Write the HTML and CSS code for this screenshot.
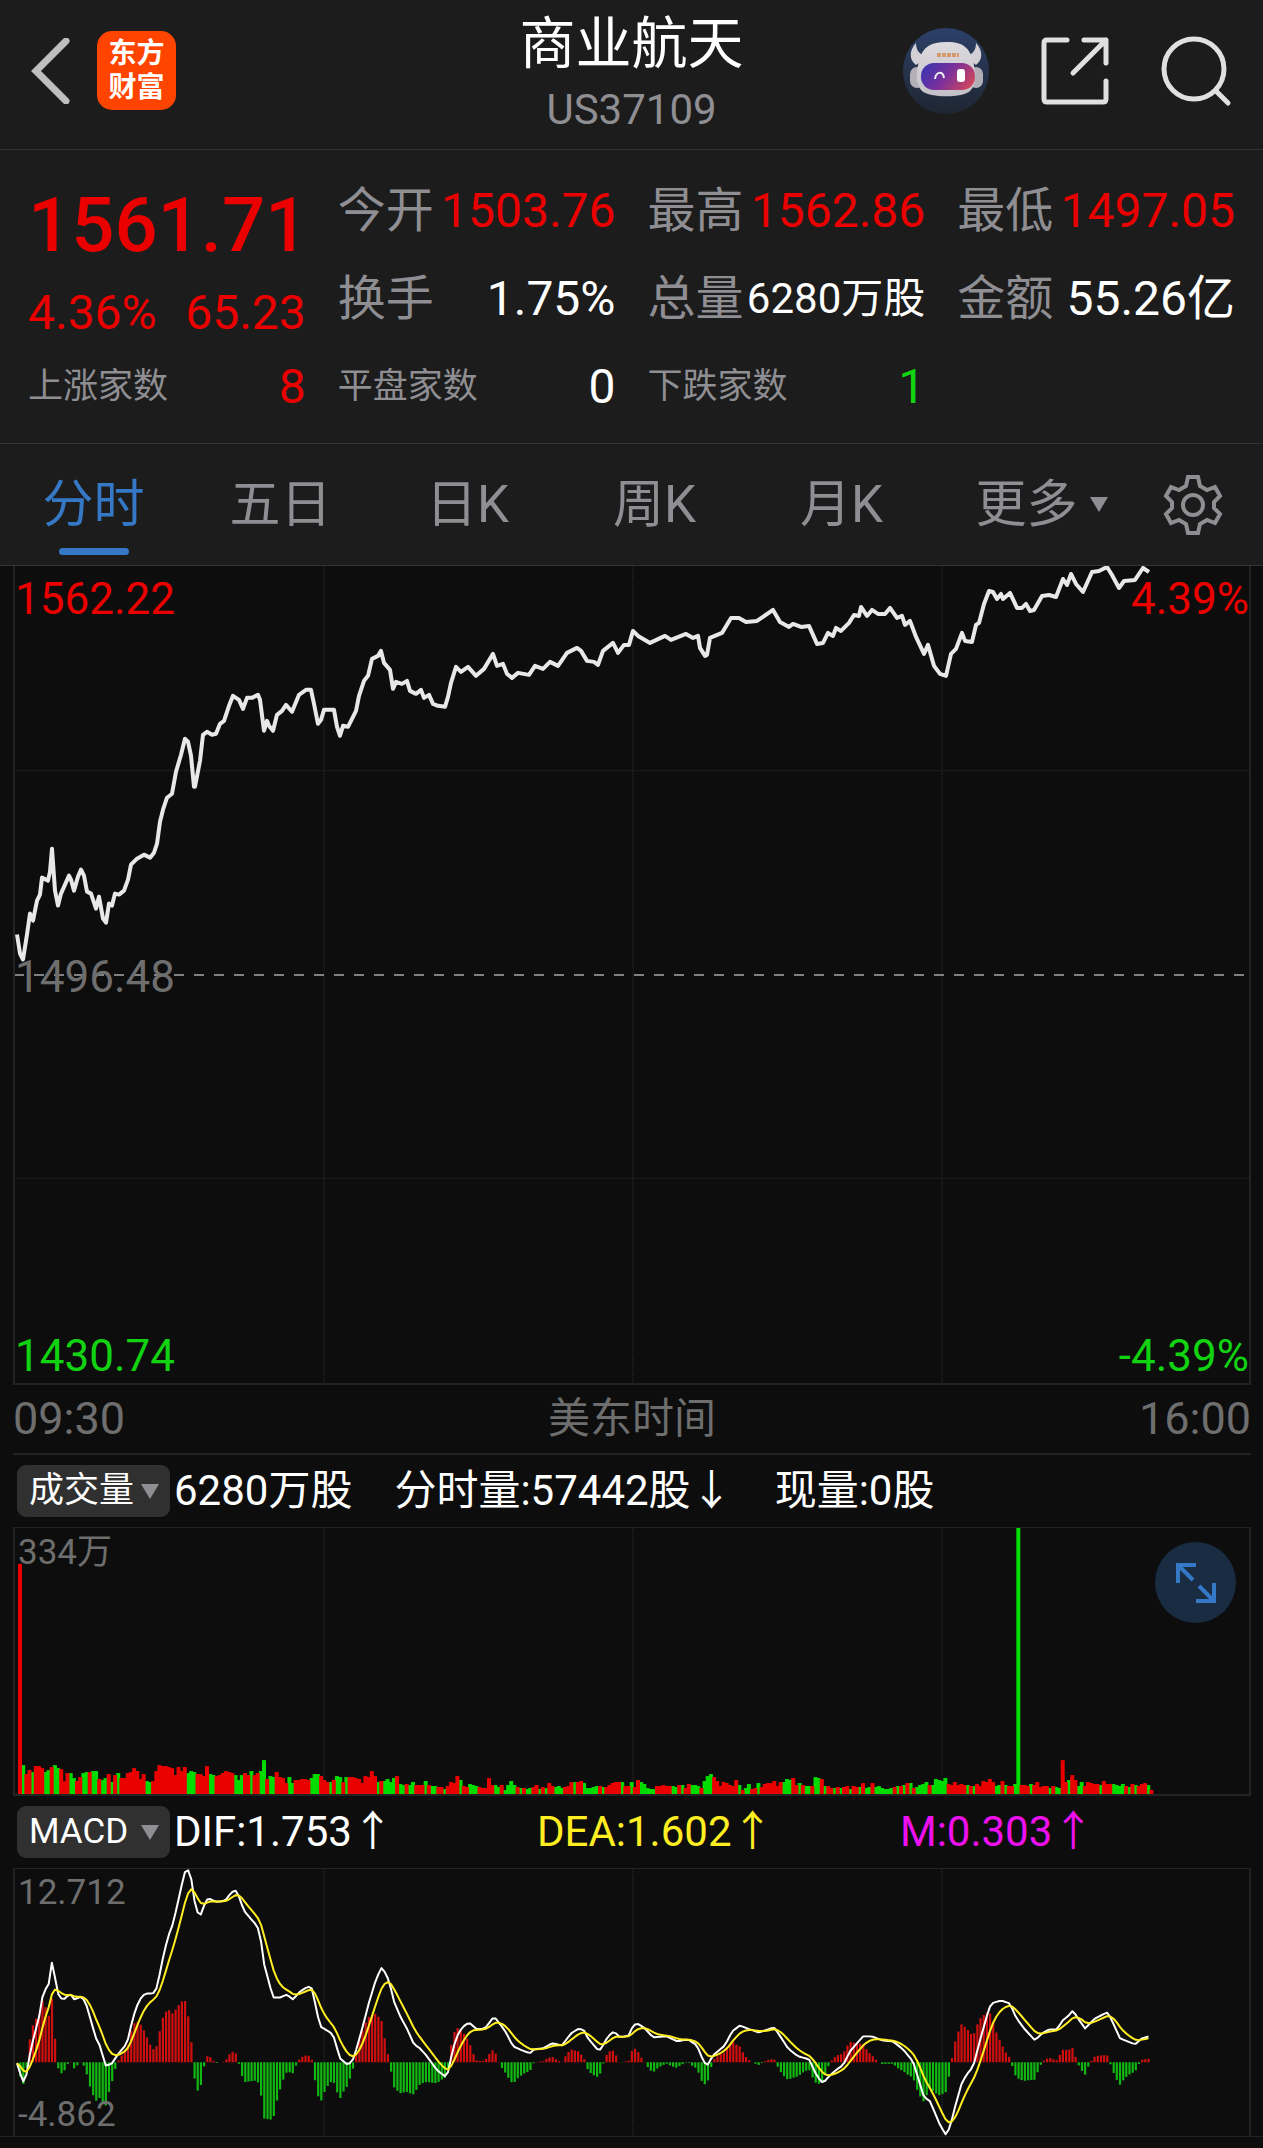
FILE: index.html
```html
<!DOCTYPE html>
<html lang="zh-CN">
<head>
  <meta charset="UTF-8">
  <meta name="viewport" content="width=device-width, initial-scale=1.0">
  <title>商业航天 US37109</title>
  <link rel="stylesheet" href="styles.css">
</head>
<body>
  <header class="topbar">
    <div class="topbar-left">
      <button class="icon-btn" aria-label="返回">
        <svg width="40" height="66" viewBox="0 0 40 66"><path d="M35 3 L5 33 L35 63" fill="none" stroke="#bfbfbf" stroke-width="7" stroke-linecap="round" stroke-linejoin="miter"/></svg>
      </button>
      <a class="logo" href="#"><span>东方</span><span>财富</span></a>
    </div>
    <div class="title">
      <h1>商业航天</h1>
      <p>US37109</p>
    </div>
    <div class="topbar-right">
      <button class="icon-btn" aria-label="智能助手">
        <svg width="88" height="88" viewBox="0 0 88 88">
          <defs>
            <linearGradient id="sky" x1="0" y1="0" x2="0" y2="1"><stop offset="0" stop-color="#2c4068"/><stop offset="1" stop-color="#1f2632"/></linearGradient>
            <linearGradient id="shell" x1="0" y1="0" x2="0" y2="1"><stop offset="0" stop-color="#dcdade"/><stop offset="1" stop-color="#c4c1c8"/></linearGradient>
            <linearGradient id="visor" x1="0" y1="0.2" x2="1" y2="0.6"><stop offset="0" stop-color="#3a35b0"/><stop offset="0.5" stop-color="#7a2f9c"/><stop offset="1" stop-color="#cc4660"/></linearGradient>
          </defs>
          <circle cx="44" cy="44" r="43" fill="url(#sky)"/>
          <path d="M14 16 C8 22 6 32 14 38 L26 30 C18 28 14 24 14 16 Z M74 16 C80 22 82 32 74 38 L62 30 C70 28 74 24 74 16 Z" fill="#d2d0d5"/>
          <rect x="8" y="40" width="14" height="21" rx="7" fill="#b2afb6"/>
          <rect x="67" y="40" width="14" height="21" rx="7" fill="#b2afb6"/>
          <path d="M44 15 C59 14 68 20 71 34 C74 46 75 57 68 64 C61 71 28 71 20 64 C13 57 14 46 17 34 C20 20 29 15 44 15 Z" fill="url(#shell)"/>
          <rect x="19" y="36" width="54" height="27" rx="13" fill="url(#visor)"/>
          <path d="M35 28 L57 28" stroke="#d29a6c" stroke-width="4" stroke-dasharray="4 1"/>
          <path d="M33 52 C34 44 41 44 42 51" fill="none" stroke="#eee" stroke-width="2"/>
          <rect x="55" y="42" width="8" height="13" rx="3" fill="#fff"/>
        </svg>
      </button>
      <button class="icon-btn" aria-label="分享">
        <svg width="70" height="70" viewBox="0 0 70 70" fill="none" stroke="#e0e0e0" stroke-width="5" stroke-linecap="round" stroke-linejoin="round"><path d="M27 4 H7 Q4 4 4 7 V63 Q4 66 7 66 H63 Q66 66 66 63 V45"/><path d="M44 4 H66 V27 M66 4 L33 37"/></svg>
      </button>
      <button class="icon-btn" aria-label="搜索">
        <svg width="72" height="72" viewBox="0 0 72 72" fill="none" stroke="#e0e0e0" stroke-width="5" stroke-linecap="round"><circle cx="34" cy="34" r="30"/><path d="M56 56 L68 68"/></svg>
      </button>
    </div>
  </header>

  <section class="quote">
    <div class="lead up">
      <strong>1561.71</strong>
      <p><span>4.36%</span><span>65.23</span></p>
    </div>
    <div class="item"><span>今开</span><b class="up">1503.76</b></div>
    <div class="item"><span>最高</span><b class="up">1562.86</b></div>
    <div class="item"><span>最低</span><b class="up">1497.05</b></div>
    <div class="item"><span>换手</span><b>1.75%</b></div>
    <div class="item"><span>总量</span><b class="compact">6280万股</b></div>
    <div class="item"><span>金额</span><b>55.26亿</b></div>
    <div class="item small"><span>上涨家数</span><b class="up">8</b></div>
    <div class="item small"><span>平盘家数</span><b>0</b></div>
    <div class="item small"><span>下跌家数</span><b class="down">1</b></div>
  </section>

  <nav class="tabs">
    <button class="active">分时</button>
    <button>五日</button>
    <button>日K</button>
    <button>周K</button>
    <button>月K</button>
    <button class="more">更多<i class="caret"></i></button>
    <button aria-label="设置">
      <svg width="62" height="62" viewBox="0 0 62 62" fill="none" stroke="#8e8e93" stroke-width="4"><path d="M26 3 H36 L38 12 L45 16 L53 13 L58 22 L52 28 V34 L58 40 L53 49 L45 46 L38 50 L36 59 H26 L24 50 L17 46 L9 49 L4 40 L10 34 V28 L4 22 L9 13 L17 16 L24 12 Z"/><circle cx="31" cy="31" r="10"/></svg>
    </button>
  </nav>

  <main class="charts">
    <div class="plot plot-price">
      <svg id="price" viewBox="1 0 1234 818" preserveAspectRatio="none"></svg>
      <span class="tag top left up">1562.22</span>
      <span class="tag top right up">4.39%</span>
      <span class="tag middle left">1496.48</span>
      <span class="tag bottom left down">1430.74</span>
      <span class="tag bottom right down">-4.39%</span>
    </div>
    <div class="axis"><span>09:30</span><span>美东时间</span><span>16:00</span></div>

    <div class="legend">
      <label class="pick"><select aria-label="副图指标一"><option>成交量</option></select><i class="caret"></i></label>
      <span>6280万股</span><span>分时量:57442股↓</span><span>现量:0股</span>
    </div>
    <div class="plot plot-sub">
      <svg id="volume" viewBox="1 0 1234 267" preserveAspectRatio="none"></svg>
      <span class="tag note top left">334万</span>
      <button class="expand" aria-label="全屏">
        <svg width="40" height="48" viewBox="0 0 40 48" fill="none" stroke="#3578c5" stroke-width="4"><path d="M2 24 V6 H20 M3 7 L17 21"/><path d="M38 24 V42 H20 M37 41 L23 27"/></svg>
      </button>
    </div>

    <div class="legend">
      <label class="pick"><select aria-label="副图指标二"><option>MACD</option></select><i class="caret"></i></label>
      <div class="values"><span>DIF:1.753↑</span><span class="dea">DEA:1.602↑</span><span class="macd">M:0.303↑</span></div>
    </div>
    <div class="plot plot-sub plot-last">
      <svg id="macd" viewBox="1 0 1234 268" preserveAspectRatio="none"></svg>
      <span class="tag note top left">12.712</span>
      <span class="tag note bottom left">-4.862</span>
    </div>
  </main>

  <script src="chart.js"></script>
</body>
</html>
```
FILE: styles.css
```css
* { box-sizing: border-box; }
body { margin: 0; background: #0d0d0d; color: #fff; font-family: Roboto, "Noto Sans CJK SC", sans-serif; font-size: 42px; line-height: 1.2; }
h1, p { margin: 0; font-weight: 400; }
button { padding: 0; border: 0; background: none; color: inherit; font: inherit; cursor: pointer; }
svg { display: block; }
.up { color: #eb0000; }
.down { color: #12d312; }

.topbar { display: grid; grid-template-columns: 1fr auto 1fr; align-items: center; height: 150px; padding: 0 31px 8px; background: #1c1c1c; border-bottom: 1px solid #333; }
.topbar-left { display: flex; align-items: center; gap: 26px; }
.topbar-right { display: flex; align-items: center; justify-content: flex-end; gap: 50px; }
.logo { display: flex; flex-direction: column; align-items: center; justify-content: center; width: 79px; height: 79px; border-radius: 15px; background: #ff4400; color: #fff; font-size: 28px; font-weight: 700; line-height: 34px; text-decoration: none; }
.title { padding-top: 8px; text-align: center; }
.title h1 { font-size: 56px; line-height: 70px; }
.title p { font-size: 42px; line-height: 62px; color: #8e8e93; }

.quote { display: grid; grid-template-columns: repeat(4, minmax(0, 1fr)); grid-auto-rows: 88px; column-gap: 32px; padding: 17px 28px 12px; background: #1c1c1c; border-bottom: 1px solid #333; }
.lead { grid-row: span 2; display: flex; flex-direction: column; gap: 20px; padding-top: 20px; }
.lead strong { font-size: 76px; font-weight: 500; line-height: 76px; }
.lead p { display: flex; justify-content: space-between; font-size: 48px; line-height: 60px; }
.item { display: flex; align-items: center; justify-content: space-between; white-space: nowrap; }
.item span { font-size: 48px; color: #8e8e93; }
.item b { font-size: 48px; font-weight: 400; }
.item .compact { font-size: 42px; }
.item.small span { font-size: 35px; }

.tabs { display: grid; grid-template-columns: repeat(6, 187fr) 141fr; height: 122px; background: #1c1c1c; border-bottom: 1px solid #333; color: #8e8e93; font-size: 51px; }
.tabs button { display: flex; align-items: center; justify-content: center; }
.tabs .active { position: relative; color: #3578c5; }
.tabs .active::after { content: ""; position: absolute; bottom: 10px; width: 70px; height: 7px; border-radius: 4px; background: #3578c5; }
.tabs .more { gap: 12px; padding-left: 26px; }
.caret { border: 9px solid transparent; border-top: 15px solid #8e8e93; border-bottom: 0; }

.charts { padding: 0 12px 0 13px; }
.plot { position: relative; border: 2px solid #232323; border-width: 0 2px 2px; }
.plot svg { width: 100%; }
.plot-price > svg { height: 817px; }
.plot-sub { border-top-width: 1px; }
.plot-sub > svg { height: 266px; }
.tag { position: absolute; font-size: 44px; line-height: 52px; color: #6e6e6e; }
.tag.up { color: #eb0000; }
.tag.down { color: #12d312; }
.top { top: 7px; }
.middle { top: 50%; margin-top: -24px; }
.bottom { bottom: 1px; }
.left { left: 0; }
.right { right: 0; }
.note { left: 3px; font-size: 35px; }
.note.top { top: -1px; }
.note.bottom { bottom: -5px; }
.axis { display: flex; justify-content: space-between; align-items: center; height: 70px; border-bottom: 2px solid #232323; color: #6e6e6e; font-size: 45px; }
.axis span:nth-child(2) { font-size: 42px; }

.legend { display: flex; align-items: center; height: 72px; padding-left: 4px; white-space: nowrap; }
.legend > span { margin-right: 42px; }
.pick { position: relative; margin-right: 4px; }
.pick select { display: block; appearance: none; width: 153px; height: 52px; padding: 0 0 0 12px; border: 0; border-radius: 9px; background: #303030; color: #fff; font: inherit; font-size: 35px; }
.pick .caret { position: absolute; right: 11px; top: 19px; pointer-events: none; }
.values { display: grid; grid-template-columns: repeat(3, 1fr); flex: 1; margin-right: -12px; }
.dea { color: #ffee22; }
.macd { color: #ee11ee; }
.expand { position: absolute; top: 14px; right: 13px; display: flex; align-items: center; justify-content: center; width: 81px; height: 81px; border-radius: 50%; background: #192c42; }
.plot .expand svg { width: 40px; }
.plot-last { margin: 0 -12px 0 -13px; padding: 0 12px 0 13px; border-width: 0 0 1px; }
.plot-last > svg { height: 268px; border: 2px solid #232323; border-width: 1px 2px 0; }
.plot-last .left { left: 18px; }
```
FILE: chart.js
```js
const STEP = 1236 / 390; // one trading minute
const RED = '#eb0000';
const GREEN = '#00dc00';

// x,y pairs in plot units
const price = `3,369 6,388 9,394 13,369 16,348 19,355 23,335 26,329 28,312 34,315 36,306 38,283 41,325 44,340 47,328 51,319 55,310 57,314 60,325 64,311 67,304 70,310 73,326 77,328 82,343 85,331 89,353 92,357 95,338 98,340 101,328 105,329 110,325 114,314 117,299 123,293 130,289 136,292 140,287 143,278 146,256 149,244 153,232 158,228 162,206 167,189 171,173 174,176 177,190 180,221 181,221 186,195 189,169 193,166 198,169 202,168 206,158 210,155 215,140 219,130 225,134 229,143 233,132 238,132 244,129 246,134 250,165 253,155 255,160 259,165 263,149 268,145 272,139 278,146 285,129 292,124 297,124 300,138 304,158 307,154 310,144 320,144 323,161 326,170 329,160 334,161 338,153 342,145 345,130 350,115 354,110 358,93 364,90 367,85 370,97 376,104 379,123 382,116 388,118 393,115 396,125 402,128 407,124 410,132 415,129 419,138 424,140 431,141 434,131 437,117 442,101 447,106 454,101 462,110 470,103 479,88 483,100 489,98 493,108 498,112 504,107 515,109 521,100 529,103 536,96 544,100 553,87 563,82 567,85 573,95 580,96 584,99 589,85 599,77 604,87 610,79 615,79 619,65 624,70 636,77 651,70 657,74 672,68 679,72 684,70 686,82 691,90 693,89 696,72 708,67 717,52 725,52 732,56 743,55 759,44 766,56 775,61 779,58 787,61 795,60 803,78 809,77 814,67 819,70 822,62 827,65 835,57 840,49 845,50 847,41 853,50 858,44 864,48 871,48 876,42 883,52 888,50 891,59 896,55 902,71 910,88 914,79 920,100 926,108 932,110 937,88 942,83 948,67 951,75 958,76 962,59 965,57 970,38 975,25 979,26 983,33 987,28 989,33 996,27 1003,42 1008,42 1012,38 1016,45 1020,44 1028,30 1035,29 1042,31 1049,13 1053,19 1057,8 1062,18 1069,26 1078,6 1085,5 1093,1 1098,9 1105,22 1110,15 1121,14 1129,2 1135,6`;

const dif = `3,195 9,214 13,205 16,185 19,172 25,149 29,125 35,115 38,93 41,109 44,125 48,131 51,130 56,125 61,132 64,129 68,128 72,135 82,170 85,175 92,198 98,195 104,186 113,175 119,149 125,132 131,125 139,125 143,119 149,89 154,68 158,58 162,42 168,15 171,3 174,1 177,8 180,30 184,45 186,48 189,39 194,29 202,33 211,32 217,24 221,21 224,25 230,42 236,49 243,57 246,65 250,95 259,129 266,129 273,126 279,131 286,123 294,118 298,120 302,139 306,158 313,162 319,166 326,190 333,196 338,194 343,179 349,157 355,134 361,114 367,99 370,102 375,112 380,133 388,152 391,156 400,176 406,180 413,188 423,202 431,208 434,204 438,185 442,170 448,159 455,154 463,161 471,160 480,148 487,157 492,164 499,178 508,182 516,185 520,181 529,180 538,175 548,177 557,165 565,160 570,162 574,170 585,183 589,177 594,168 600,163 606,169 615,167 619,157 623,155 630,159 639,169 653,168 663,173 674,171 683,177 689,192 693,198 699,187 711,177 718,163 726,157 733,160 745,164 760,159 765,166 774,180 784,188 795,191 803,208 809,215 816,207 823,201 829,197 836,183 849,168 858,168 868,172 879,173 889,181 899,193 910,229 916,233 926,257 932,267 936,259 941,239 948,214 955,203 959,199 966,172 973,147 977,135 987,132 996,135 1002,149 1010,160 1021,172 1028,165 1035,161 1043,161 1050,150 1053,149 1059,142 1064,150 1071,160 1081,150 1093,144 1097,150 1106,170 1121,176 1128,170 1135,168`;

// minute index -> bars from there on, r = up, g = down
const volume = {
  0: 'r231 g29 r20 r24 g22 r28 r28 r26 g22 g24 r27 g29 g26 r25 r13 r21 g21 g16 r13 r17 g21 g22 r22 g23 g23 r15 g14 g16 r20 g12 r19 g21',
  32: 'r16 r16 r21 r22 r26 r23 r15 r20 g13 g12 r13 r23 r29 r28 r28 r27 r26 r19 r27 r23 r27 g21 g23 g22 r20 r20 r18 r28 g20 g19',
  62: 'r18 r19 r21 r23 r22 r21 g19 g14 g19 r21 r19 g23 r19 r21 g23 g34 r15 g18 g17 r22 r17 r16 r11 g17 g11 r14 r14 r15 r15 r14',
  92: 'g16 g20 g20 r18 r14 r12 g12 r14 g18 g17 r12 g17 r17 r17 r16 r15 r11 r18 r17 r23 r18 g12 r13 g13 g15 g12 g16 r18 g10 g9 r10 g9 g12',
  125: 'r9 r9 r9 g13 r9 g8 g8 r7 r7 g5 r8 r12 r11 r18 g14 r8 r7 g10 g9 g8 r7 r6 r6 r16 r9 g9 g7 r9 g4 g9 g13 g9 r7 g6 r6 g5 g6 r7 r9 g5 r7 g6 r11',
  168: 'r8 g7 g8 g6 r7 r8 r12 g12 r12 r13 g11 g6 g6 g7 g8 r8 g7 r7 r9 r11 r12 r12 g12 r8 r8 g12 r7 r14 g12 g10 g6 g5 g5 r8 r8 r9 r8 r8',
  206: 'g8 g7 r9 g9 r6 r10 g9 g9 g8 r6 g13 g18 g20 r17 r13 r8 r12 r11 r9 r8 r14 g9 r4 g6 g10 r5 r6 g11 r7 r10 r11 r11 r13 r8 r12 g12 g15 g14 r16 r9 g11 r9 g8 g8 r8',
  251: 'g17 g16 r15 g8 r8 r6 g6 r7 g6 r7 r8 g5 r8 r7 g7 r11 g6 g7 r11 g7 g8 g6 g5 g5 g6 r7 g8 r8 g9 r11 g11 r6 g7 g9 g10 g12 r9 g9 g15 g14 g13 g16',
  293: 'r10 r9 r12 r9 r10 r9 g9 r8 g8 r10 r8 r13 r12 r15 r12 g8 g9 r13 g9 r8 r8 g10 g267 r9 r9 r8 g10 r9 r12 r7 r8 r8 g6 r8 g7 g6',
  329: 'r34 r12 g14 r19 r14 g8 g12 r8 r12 r11 r10 r10 g9 r13 r10 r10 g10 g9 g8 g10 r8 g7 r10 g9 r8 r10 r11 g9 r4'
};

function parse(text) {
  return text.split(' ').map(p => p.split(',').map(Number));
}

function line(points, color, width) {
  return `<polyline points="${points.join(' ')}" fill="none" stroke="${color}" stroke-width="${width}" stroke-linejoin="round"/>`;
}

function grid(height, rows) {
  let out = '';
  for (let i = 1; i < 4; i++) out += `<path d="M${i * 309 + 1} 0V${height}" stroke="#333" stroke-dasharray="1 1"/>`;
  for (const y of rows) out += `<path d="M0 ${y}H1236" stroke="#2c2c2c" stroke-dasharray="1 1"/>`;
  return out;
}

// y value of a line at every minute
function sample(points) {
  const out = [];
  let k = 0;
  for (let x = 3; x <= 1135; x += STEP) {
    while (k < points.length - 2 && points[k + 1][0] < x) k++;
    const [x0, y0] = points[k];
    const [x1, y1] = points[k + 1];
    out.push([x, y0 + (y1 - y0) * (x - x0) / (x1 - x0)]);
  }
  return out;
}

function drawPrice() {
  document.getElementById('price').innerHTML = grid(818, [205, 613]) +
    '<path d="M0 409.5H1236" stroke="#808080" stroke-width="2" stroke-dasharray="10 10"/>' +
    line(parse(price), '#e8e8e8', 4);
}

function drawVolume() {
  let red = '', green = '';
  for (const start in volume) {
    volume[start].split(' ').forEach((bar, n) => {
      const h = Number(bar.slice(1));
      const rect = `<rect x="${(4 + (Number(start) + n) * STEP).toFixed(1)}" y="${267 - h}" width="4" height="${h}"/>`;
      if (bar[0] === 'r') red += rect; else green += rect;
    });
  }
  document.getElementById('volume').innerHTML = grid(267, []) + `<g fill="${GREEN}">${green}</g><g fill="${RED}">${red}</g>`;
}

function drawMacd() {
  const fast = sample(parse(dif));
  let avg = fast[0][1];
  let bars = '';
  const slow = fast.map(([x, y]) => {
    avg += (y - avg) * 0.29;
    const h = 2 * (avg - y);
    bars += `<rect x="${(x - 1).toFixed(1)}" y="${h > 0 ? 194 - h : 194}" width="2.2" height="${Math.abs(h)}" fill="${h > 0 ? '#d01010' : '#12b812'}"/>`;
    return [x, avg];
  });
  document.getElementById('macd').innerHTML = grid(268, []) + bars + line(fast, '#fff', 2) + line(slow, '#ffee22', 2);
}

drawPrice();
drawVolume();
drawMacd();
```
